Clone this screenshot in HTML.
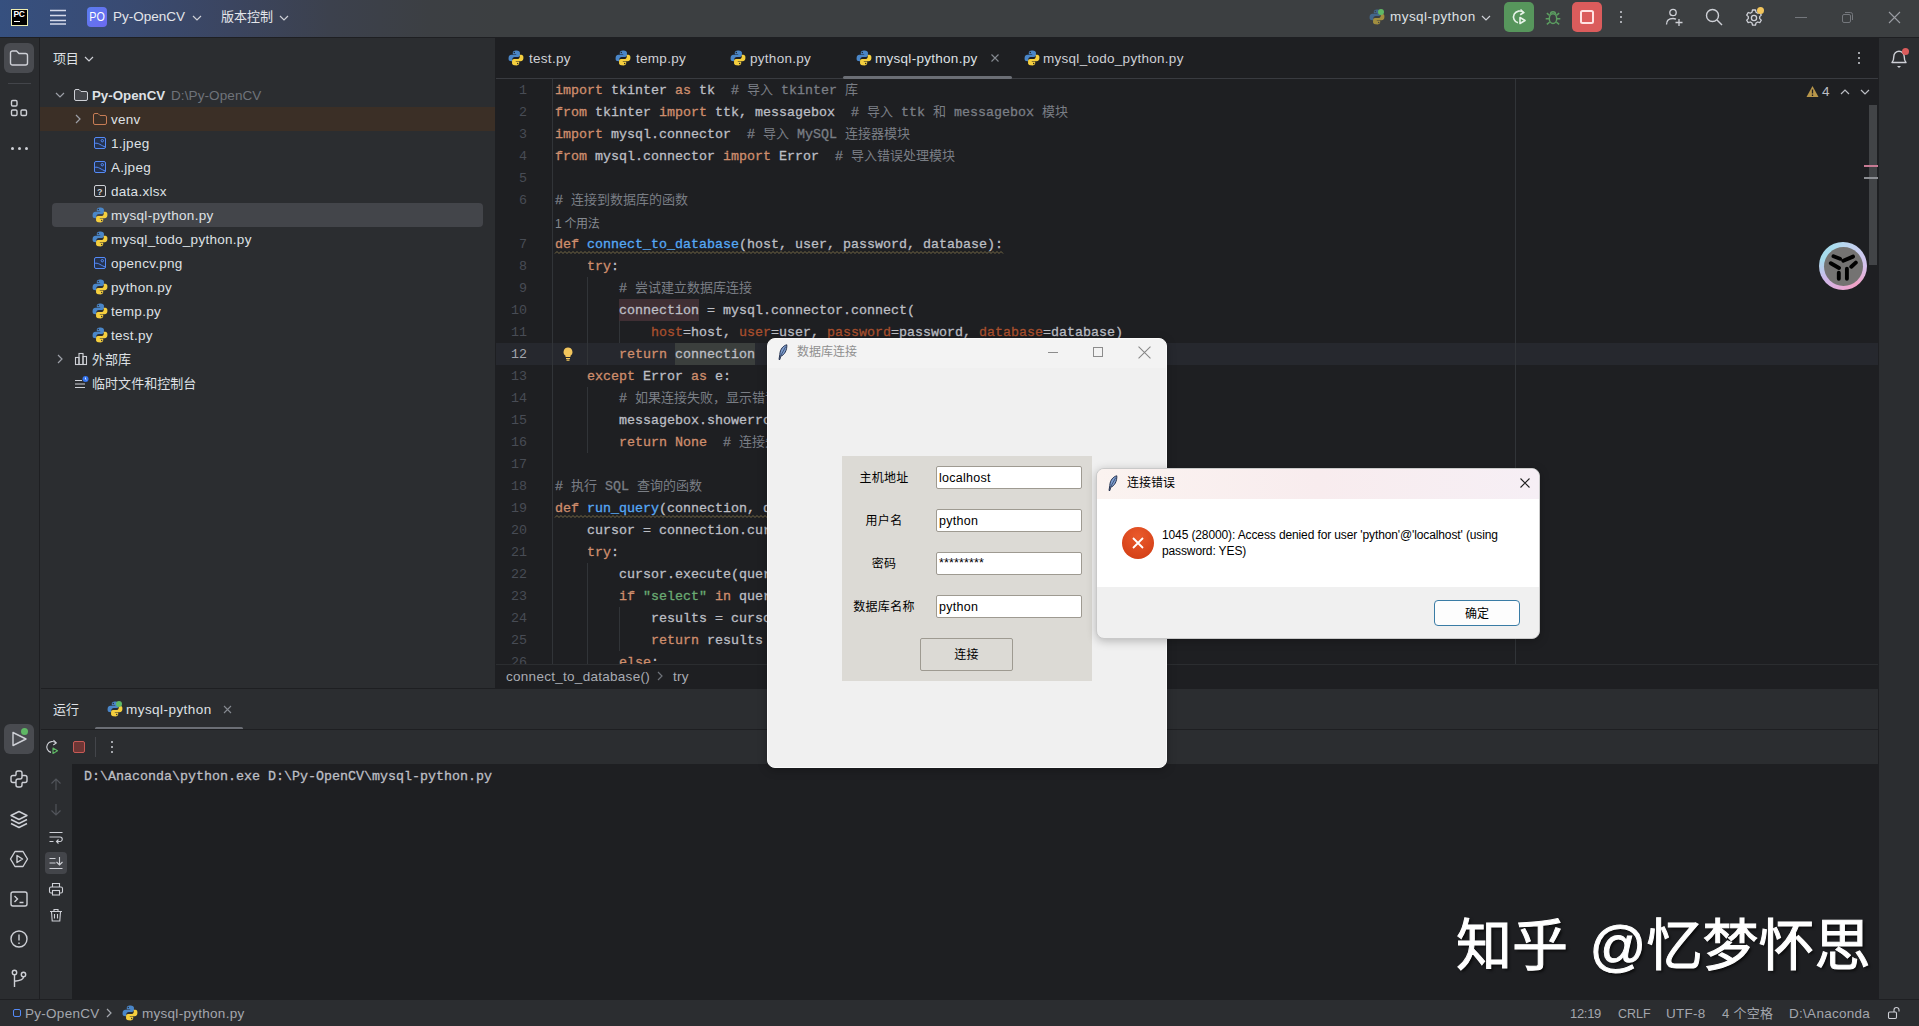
<!DOCTYPE html>
<html lang="zh"><head><meta charset="utf-8"><title>PyCharm</title>
<style>
*{box-sizing:border-box}
html,body{margin:0;padding:0}
body{width:1919px;height:1026px;overflow:hidden;background:#2b2d30;position:relative;font-family:"Liberation Sans","Noto Sans CJK SC",sans-serif;font-size:13.500px;letter-spacing:.28px;color:#dfe1e5}
.abs,.t,.ic,.box{position:absolute}
.t{white-space:pre}
.ic{display:block;overflow:visible}
.m{font-family:"Liberation Mono","Noto Sans CJK SC",monospace;font-size:13.333px;letter-spacing:0;-webkit-text-stroke:.3px currentColor}
.code{color:#bcbec4}
.k{color:#cf8e6d}.c{color:#7a7e85}.s{color:#6aab73}.f{color:#56a8f5}.n{color:#a94f2d}.num{color:#2aacb8}
.cj{font-size:13px;-webkit-text-stroke:0}
.ln{color:#484c55;text-align:right;width:31px;-webkit-text-stroke:0}
.dim{color:#6f737a}
.st{color:#a4a7ae}
</style></head><body>

<div class="box" style="left:0;top:0;width:1919px;height:38px;background:linear-gradient(to right,#36507f 0,#394b73 120px,#3b4560 230px,#3c414d 330px,#3c3f43 430px,#3c3f41 500px);border-bottom:1px solid #1e1f22"></div>
<div class="box" style="left:11px;top:9px;width:16.500px;height:16.500px;background:#000;border:1px solid #eeeeb0"></div>
<div class="t " style="left:13.5px;top:10px;height:9px;line-height:9px;font-size:8.500px;font-weight:bold;color:#fff;letter-spacing:-.4px">PC</div>
<div class="box" style="left:14px;top:21px;width:5.500px;height:1px;background:#fff"></div>
<svg class="ic" style="left:49px;top:8px" width="18" height="18" viewBox="0 0 18 18"><path d="M1 2.500h16M1 7.500h16M1 12.500h16M1 16h16" stroke="#d5daea" stroke-width="1.300" fill="none"/></svg>
<div class="box" style="left:87px;top:7px;width:20px;height:20px;border-radius:4px;background:linear-gradient(135deg,#5a7df0,#6d6af0)"></div>
<div class="t " style="left:87px;top:7px;height:20px;line-height:20px;width:20px;text-align:center;font-size:12.500px;color:#fff;letter-spacing:0;transform:scaleX(.86)">PO</div>
<div class="t " style="left:113px;top:7px;height:20px;line-height:20px;color:#e3e5ea;letter-spacing:0">Py-OpenCV</div>
<svg class="ic" style="left:189px;top:10px" width="16" height="16" viewBox="0 0 16 16"><path d="M4 6 l4 4 l4 -4" fill="none" stroke="#ced0d6" stroke-width="1.2"/></svg>
<div class="t " style="left:221px;top:7px;height:20px;line-height:20px;font-size:13px;color:#e3e5ea;letter-spacing:0">版本控制</div>
<svg class="ic" style="left:276px;top:10px" width="16" height="16" viewBox="0 0 16 16"><path d="M4 6 l4 4 l4 -4" fill="none" stroke="#ced0d6" stroke-width="1.2"/></svg>
<svg class="ic" style="opacity:.55;left:1369px;top:9px" width="16" height="16" viewBox="0.500 0.500 15 15"><path fill="#4a86c8" d="M7.9 1C5.9 1 5 1.9 5 3v1.5h3.2V5H3.5C2.3 5 1.3 5.9 1.1 7.600c-.2 1.600 0 3 1.200 3.300.4.1.9.1 1.200.1H4.500V9.200c0-1.200 1-2.200 2.300-2.200h3.100c1 0 1.800-.8 1.800-1.800V3c0-1-.9-1.800-1.900-1.900C9.200 1 8.500 1 7.900 1z"/><circle cx="6.400" cy="2.800" r=".65" fill="#3c3f41"/><path fill="#f5cf3e" d="M8.100 15c2 0 2.900-.9 2.900-2v-1.500H7.800V11h4.700c1.200 0 2.200-.9 2.400-2.600.2-1.600 0-3-1.200-3.300-.4-.1-.9-.1-1.200-.1H11.500v1.800c0 1.200-1 2.200-2.300 2.200H6.100c-1 0-1.800.8-1.800 1.800V13c0 1 .9 1.800 1.900 1.900.6.1 1.300.1 1.900.1z"/><circle cx="9.600" cy="13.200" r=".65" fill="#3c3f41"/></svg>
<div class="box" style="left:1378px;top:9px;width:6px;height:6px;border-radius:3px;background:#5fb865"></div>
<div class="t " style="left:1390px;top:7px;height:20px;line-height:20px;letter-spacing:.45px">mysql-python</div>
<svg class="ic" style="left:1478px;top:10px" width="16" height="16" viewBox="0 0 16 16"><path d="M4 6 l4 4 l4 -4" fill="none" stroke="#ced0d6" stroke-width="1.2"/></svg>
<div class="box" style="left:1504px;top:2px;width:30px;height:30px;border-radius:5px;background:#57965c"></div>
<svg class="ic" style="left:1510px;top:8px" width="18" height="18" viewBox="0 0 18 18"><path d="M13.500 4.500 A6 6 0 1 0 8 14.800" fill="none" stroke="#e6f3e7" stroke-width="1.600"/><path d="M10.500 1.500 l3.200 3 l-3.500 2.200" fill="none" stroke="#e6f3e7" stroke-width="1.600"/><path d="M10 9.500 l5 3 l-5 3z" fill="none" stroke="#e6f3e7" stroke-width="1.600" stroke-linejoin="round"/></svg>
<svg class="ic" style="left:1544px;top:8px" width="18" height="18" viewBox="0 0 16 16"><g fill="none" stroke="#5c9e61" stroke-width="1.300"><ellipse cx="8" cy="9.500" rx="3.300" ry="4.300"/><path d="M5.800 5.500 a2.200 2.200 0 0 1 4.400 0"/><path d="M1.500 9.500h3M11.500 9.500h3M2.500 4.500l2.500 2M13.500 4.500l-2.500 2M2.500 14.500l2.500-2M13.500 14.500l-2.500-2"/></g></svg>
<div class="box" style="left:1572px;top:2px;width:30px;height:30px;border-radius:5px;background:#db5c5c"></div>
<div class="box" style="left:1580px;top:10px;width:14px;height:14px;border-radius:2.500px;border:2px solid #ffe4e4"></div>
<div class="box" style="left:1620px;top:11px;width:2px;height:2px;border-radius:1px;background:#ced0d6"></div><div class="box" style="left:1620px;top:16px;width:2px;height:2px;border-radius:1px;background:#ced0d6"></div><div class="box" style="left:1620px;top:21px;width:2px;height:2px;border-radius:1px;background:#ced0d6"></div>
<svg class="ic" style="left:1664px;top:7px" width="20" height="20" viewBox="0 0 20 20"><g fill="none" stroke="#ced0d6" stroke-width="1.300"><circle cx="9" cy="5.500" r="3.200"/><path d="M2.500 17.500 c0-4 2.500-6 6.500-6 c1.200 0 2 .2 3 .6"/><path d="M15 12v7M11.500 15.500h7"/></g></svg>
<svg class="ic" style="left:1704px;top:7px" width="20" height="20" viewBox="0 0 20 20"><g fill="none" stroke="#ced0d6" stroke-width="1.400"><circle cx="8.500" cy="8.500" r="6"/><path d="M13 13l5 5"/></g></svg>
<svg class="ic" style="left:1744px;top:8px" width="20" height="20" viewBox="0 0 20 20"><g fill="none" stroke="#ced0d6" stroke-width="1.300"><circle cx="10" cy="10" r="2.600"/><path d="M8.500 2h3l.5 2.200 1.700 1 2.100-.7 1.500 2.600-1.600 1.500v2l1.600 1.500-1.500 2.600-2.100-.7-1.700 1-.5 2.200h-3l-.5-2.200-1.700-1-2.100.7-1.500-2.600 1.600-1.500v-2L2.700 7.100l1.500-2.600 2.100.7 1.700-1z" stroke-linejoin="round"/></g></svg>
<div class="box" style="left:1757px;top:7px;width:7px;height:7px;border-radius:4px;background:#f2c55c"></div>
<div class="box" style="left:1795px;top:17px;width:12px;height:1px;background:#74777c"></div>
<svg class="ic" style="left:1841px;top:11px" width="13" height="13" viewBox="0 0 13 13"><g fill="none" stroke="#74777c"><rect x="1.500" y="3.500" width="8" height="8" rx="1.500"/><path d="M4 1.500h5.500a2 2 0 0 1 2 2V9"/></g></svg>
<svg class="ic" style="left:1888px;top:11px" width="13" height="13" viewBox="0 0 13 13"><path d="M1 1l11 11M12 1L1 12" stroke="#9a9da3" stroke-width="1.100" fill="none"/></svg>
<div class="box" style="left:39px;top:38px;width:1px;height:961px;background:#1e1f22"></div>
<div class="box" style="left:4px;top:43px;width:30px;height:30px;border-radius:6px;background:#494b50"></div>
<svg class="ic" style="left:9px;top:48px" width="20" height="20" viewBox="0 0 20 20"><path d="M1.500 5 a2 2 0 0 1 2-2 h4 l2.500 2.500 h6.500 a2 2 0 0 1 2 2 v7.500 a2 2 0 0 1 -2 2 h-13 a2 2 0 0 1 -2-2z" fill="none" stroke="#ced0d6" stroke-width="1.400"/></svg>
<div class="box" style="left:8px;top:83px;width:23px;height:1px;background:#43454a"></div>
<svg class="ic" style="left:9px;top:98px" width="20" height="20" viewBox="0 0 20 20"><g fill="none" stroke="#ced0d6" stroke-width="1.400"><rect x="2.500" y="2.500" width="5.500" height="5.500" rx="1.200"/><rect x="2.500" y="12" width="5.500" height="5.500" rx="1.200"/><rect x="12" y="12" width="5.500" height="5.500" rx="1.200"/></g></svg>
<div class="box" style="left:11px;top:147px;width:2.500px;height:2.500px;border-radius:2px;background:#ced0d6"></div>
<div class="box" style="left:18px;top:147px;width:2.500px;height:2.500px;border-radius:2px;background:#ced0d6"></div>
<div class="box" style="left:25px;top:147px;width:2.500px;height:2.500px;border-radius:2px;background:#ced0d6"></div>
<div class="t " style="left:53px;top:49px;height:20px;line-height:20px;font-size:13px;letter-spacing:-.3px">项目</div>
<svg class="ic" style="left:81px;top:51px" width="16" height="16" viewBox="0 0 16 16"><path d="M4 6 l4 4 l4 -4" fill="none" stroke="#ced0d6" stroke-width="1.2"/></svg>
<div class="box" style="left:40px;top:107px;width:456px;height:24px;background:#3b2f26"></div>
<div class="box" style="left:52px;top:203px;width:431px;height:24px;border-radius:4px;background:#43454a"></div>
<svg class="ic" style="left:52px;top:87px" width="16" height="16" viewBox="0 0 16 16"><path d="M4 6 l4 4 l4 -4" fill="none" stroke="#9da0a8" stroke-width="1.2"/></svg>
<svg class="ic" style="left:73px;top:87px" width="16" height="16" viewBox="0 0 16 16"><path d="M1.500 4 a1.500 1.500 0 0 1 1.500-1.500 h3 l2 2 h5 a1.500 1.500 0 0 1 1.500 1.500 v6 a1.500 1.500 0 0 1 -1.500 1.500 h-10 a1.500 1.500 0 0 1 -1.500-1.500z" fill="#43454a" stroke="#ced0d6"/></svg>
<div class="t " style="left:92px;top:84px;height:24px;line-height:24px;font-weight:bold;font-size:13.300px;letter-spacing:0">Py-OpenCV</div>
<div class="t dim" style="left:171px;top:84px;height:24px;line-height:24px;letter-spacing:.1px">D:\Py-OpenCV</div>
<svg class="ic" style="left:70px;top:111px" width="16" height="16" viewBox="0 0 16 16"><path d="M6 4 l4 4 l-4 4" fill="none" stroke="#9da0a8" stroke-width="1.2"/></svg>
<svg class="ic" style="left:92px;top:111px" width="16" height="16" viewBox="0 0 16 16"><path d="M1.500 4 a1.500 1.500 0 0 1 1.500-1.500 h3 l2 2 h5 a1.500 1.500 0 0 1 1.500 1.500 v6 a1.500 1.500 0 0 1 -1.500 1.500 h-10 a1.500 1.500 0 0 1 -1.500-1.500z" fill="none" stroke="#c77d55"/></svg>
<div class="t " style="left:111px;top:108px;height:24px;line-height:24px;">venv</div>
<svg class="ic" style="left:92px;top:135px" width="16" height="16" viewBox="0 0 16 16"><rect x="2.500" y="2.500" width="11" height="11" rx="1.500" fill="#25324d" stroke="#548af7"/><circle cx="10.300" cy="5.700" r="1.200" fill="none" stroke="#548af7"/><path d="M2.500 8.500 C6 7 9.500 11 13.500 12" stroke="#548af7" fill="none"/></svg>
<div class="t " style="left:111px;top:132px;height:24px;line-height:24px;">1.jpeg</div>
<svg class="ic" style="left:92px;top:159px" width="16" height="16" viewBox="0 0 16 16"><rect x="2.500" y="2.500" width="11" height="11" rx="1.500" fill="#25324d" stroke="#548af7"/><circle cx="10.300" cy="5.700" r="1.200" fill="none" stroke="#548af7"/><path d="M2.500 8.500 C6 7 9.500 11 13.500 12" stroke="#548af7" fill="none"/></svg>
<div class="t " style="left:111px;top:156px;height:24px;line-height:24px;">A.jpeg</div>
<svg class="ic" style="left:92px;top:183px" width="16" height="16" viewBox="0 0 16 16"><rect x="2.500" y="2.500" width="11" height="11" rx="1.500" fill="none" stroke="#ced0d6"/><text x="8" y="11.500" font-size="9" font-weight="bold" text-anchor="middle" fill="#ced0d6" font-family="Liberation Sans,sans-serif">?</text></svg>
<div class="t " style="left:111px;top:180px;height:24px;line-height:24px;">data.xlsx</div>
<svg class="ic" style="left:92px;top:207px" width="16" height="16" viewBox="0.500 0.500 15 15"><path fill="#4a86c8" d="M7.9 1C5.9 1 5 1.9 5 3v1.5h3.2V5H3.5C2.3 5 1.3 5.9 1.1 7.600c-.2 1.600 0 3 1.200 3.300.4.1.9.1 1.200.1H4.500V9.200c0-1.200 1-2.200 2.300-2.200h3.100c1 0 1.800-.8 1.800-1.800V3c0-1-.9-1.800-1.900-1.900C9.200 1 8.500 1 7.900 1z"/><circle cx="6.400" cy="2.800" r=".65" fill="#2b2d30"/><path fill="#f5cf3e" d="M8.100 15c2 0 2.900-.9 2.900-2v-1.500H7.800V11h4.700c1.200 0 2.200-.9 2.400-2.600.2-1.600 0-3-1.200-3.300-.4-.1-.9-.1-1.200-.1H11.500v1.800c0 1.200-1 2.200-2.300 2.200H6.100c-1 0-1.800.8-1.800 1.800V13c0 1 .9 1.800 1.900 1.900.6.1 1.300.1 1.900.1z"/><circle cx="9.600" cy="13.200" r=".65" fill="#2b2d30"/></svg>
<div class="t " style="left:111px;top:204px;height:24px;line-height:24px;">mysql-python.py</div>
<svg class="ic" style="left:92px;top:231px" width="16" height="16" viewBox="0.500 0.500 15 15"><path fill="#4a86c8" d="M7.9 1C5.9 1 5 1.9 5 3v1.5h3.2V5H3.5C2.3 5 1.3 5.9 1.1 7.600c-.2 1.600 0 3 1.200 3.300.4.1.9.1 1.200.1H4.500V9.200c0-1.200 1-2.200 2.300-2.200h3.100c1 0 1.800-.8 1.800-1.800V3c0-1-.9-1.800-1.900-1.900C9.200 1 8.500 1 7.900 1z"/><circle cx="6.400" cy="2.800" r=".65" fill="#2b2d30"/><path fill="#f5cf3e" d="M8.100 15c2 0 2.900-.9 2.900-2v-1.500H7.800V11h4.700c1.200 0 2.200-.9 2.400-2.600.2-1.600 0-3-1.200-3.300-.4-.1-.9-.1-1.200-.1H11.500v1.800c0 1.200-1 2.200-2.300 2.200H6.100c-1 0-1.800.8-1.800 1.800V13c0 1 .9 1.800 1.900 1.900.6.1 1.300.1 1.900.1z"/><circle cx="9.600" cy="13.200" r=".65" fill="#2b2d30"/></svg>
<div class="t " style="left:111px;top:228px;height:24px;line-height:24px;">mysql_todo_python.py</div>
<svg class="ic" style="left:92px;top:255px" width="16" height="16" viewBox="0 0 16 16"><rect x="2.500" y="2.500" width="11" height="11" rx="1.500" fill="#25324d" stroke="#548af7"/><circle cx="10.300" cy="5.700" r="1.200" fill="none" stroke="#548af7"/><path d="M2.500 8.500 C6 7 9.500 11 13.500 12" stroke="#548af7" fill="none"/></svg>
<div class="t " style="left:111px;top:252px;height:24px;line-height:24px;">opencv.png</div>
<svg class="ic" style="left:92px;top:279px" width="16" height="16" viewBox="0.500 0.500 15 15"><path fill="#4a86c8" d="M7.9 1C5.9 1 5 1.9 5 3v1.5h3.2V5H3.5C2.3 5 1.3 5.9 1.1 7.600c-.2 1.600 0 3 1.200 3.300.4.1.9.1 1.200.1H4.500V9.200c0-1.200 1-2.200 2.300-2.200h3.100c1 0 1.800-.8 1.800-1.800V3c0-1-.9-1.800-1.900-1.900C9.200 1 8.500 1 7.900 1z"/><circle cx="6.400" cy="2.800" r=".65" fill="#2b2d30"/><path fill="#f5cf3e" d="M8.100 15c2 0 2.900-.9 2.900-2v-1.500H7.800V11h4.700c1.200 0 2.200-.9 2.400-2.600.2-1.600 0-3-1.200-3.300-.4-.1-.9-.1-1.200-.1H11.500v1.800c0 1.200-1 2.200-2.300 2.200H6.100c-1 0-1.800.8-1.800 1.800V13c0 1 .9 1.800 1.900 1.900.6.1 1.300.1 1.900.1z"/><circle cx="9.600" cy="13.200" r=".65" fill="#2b2d30"/></svg>
<div class="t " style="left:111px;top:276px;height:24px;line-height:24px;">python.py</div>
<svg class="ic" style="left:92px;top:303px" width="16" height="16" viewBox="0.500 0.500 15 15"><path fill="#4a86c8" d="M7.9 1C5.9 1 5 1.9 5 3v1.5h3.2V5H3.5C2.3 5 1.3 5.9 1.1 7.600c-.2 1.600 0 3 1.200 3.300.4.1.9.1 1.200.1H4.500V9.200c0-1.200 1-2.200 2.300-2.200h3.100c1 0 1.800-.8 1.800-1.800V3c0-1-.9-1.800-1.900-1.900C9.200 1 8.500 1 7.900 1z"/><circle cx="6.400" cy="2.800" r=".65" fill="#2b2d30"/><path fill="#f5cf3e" d="M8.100 15c2 0 2.900-.9 2.900-2v-1.500H7.800V11h4.700c1.200 0 2.200-.9 2.400-2.600.2-1.600 0-3-1.200-3.300-.4-.1-.9-.1-1.200-.1H11.500v1.800c0 1.200-1 2.200-2.300 2.200H6.100c-1 0-1.800.8-1.800 1.800V13c0 1 .9 1.800 1.900 1.900.6.1 1.300.1 1.900.1z"/><circle cx="9.600" cy="13.200" r=".65" fill="#2b2d30"/></svg>
<div class="t " style="left:111px;top:300px;height:24px;line-height:24px;">temp.py</div>
<svg class="ic" style="left:92px;top:327px" width="16" height="16" viewBox="0.500 0.500 15 15"><path fill="#4a86c8" d="M7.9 1C5.9 1 5 1.9 5 3v1.5h3.2V5H3.5C2.3 5 1.3 5.9 1.1 7.600c-.2 1.600 0 3 1.200 3.300.4.1.9.1 1.200.1H4.500V9.200c0-1.200 1-2.200 2.300-2.200h3.100c1 0 1.800-.8 1.800-1.800V3c0-1-.9-1.800-1.900-1.900C9.200 1 8.500 1 7.900 1z"/><circle cx="6.400" cy="2.800" r=".65" fill="#2b2d30"/><path fill="#f5cf3e" d="M8.100 15c2 0 2.900-.9 2.900-2v-1.500H7.800V11h4.700c1.200 0 2.200-.9 2.400-2.600.2-1.600 0-3-1.200-3.300-.4-.1-.9-.1-1.200-.1H11.500v1.800c0 1.200-1 2.200-2.300 2.200H6.100c-1 0-1.800.8-1.800 1.800V13c0 1 .9 1.800 1.900 1.900.6.1 1.300.1 1.900.1z"/><circle cx="9.600" cy="13.200" r=".65" fill="#2b2d30"/></svg>
<div class="t " style="left:111px;top:324px;height:24px;line-height:24px;">test.py</div>
<svg class="ic" style="left:52px;top:351px" width="16" height="16" viewBox="0 0 16 16"><path d="M6 4 l4 4 l-4 4" fill="none" stroke="#9da0a8" stroke-width="1.2"/></svg>
<svg class="ic" style="left:73px;top:351px" width="16" height="16" viewBox="0 0 16 16"><g fill="none" stroke="#ced0d6" stroke-width="1.100"><rect x="2.500" y="6.500" width="3.500" height="7"/><rect x="6" y="2.500" width="4" height="11"/><rect x="10" y="5.500" width="3.500" height="8"/></g></svg>
<div class="t " style="left:92px;top:348px;height:24px;line-height:24px;font-size:13px;letter-spacing:0">外部库</div>
<svg class="ic" style="left:73px;top:375px" width="16" height="16" viewBox="0 0 16 16"><path d="M2 5.500h7M2 9h10M2 12.500h10" stroke="#ced0d6" stroke-width="1.100" fill="none"/><circle cx="12.500" cy="4" r="3" fill="#3574f0"/><path d="M12.500 2.500v1.700l1 .8" stroke="#fff" stroke-width=".8" fill="none"/></svg>
<div class="t " style="left:92px;top:372px;height:24px;line-height:24px;font-size:13px;letter-spacing:.05px">临时文件和控制台</div>
<div class="box" style="left:495px;top:38px;width:1384px;height:651px;background:#1e1f22;border-left:1px solid #1e1f22"></div>
<div class="box" style="left:496px;top:78px;width:1382px;height:1px;background:#393b40"></div>
<svg class="ic" style="left:508px;top:50px" width="16" height="16" viewBox="0.500 0.500 15 15"><path fill="#4a86c8" d="M7.9 1C5.9 1 5 1.9 5 3v1.5h3.2V5H3.5C2.3 5 1.3 5.9 1.1 7.600c-.2 1.600 0 3 1.200 3.300.4.1.9.1 1.200.1H4.500V9.200c0-1.200 1-2.200 2.300-2.200h3.100c1 0 1.800-.8 1.800-1.800V3c0-1-.9-1.800-1.900-1.900C9.200 1 8.500 1 7.900 1z"/><circle cx="6.400" cy="2.800" r=".65" fill="#1e1f22"/><path fill="#f5cf3e" d="M8.100 15c2 0 2.900-.9 2.900-2v-1.500H7.800V11h4.700c1.200 0 2.200-.9 2.400-2.600.2-1.600 0-3-1.200-3.300-.4-.1-.9-.1-1.200-.1H11.500v1.800c0 1.200-1 2.200-2.300 2.200H6.100c-1 0-1.800.8-1.800 1.800V13c0 1 .9 1.800 1.900 1.900.6.1 1.300.1 1.900.1z"/><circle cx="9.600" cy="13.200" r=".65" fill="#1e1f22"/></svg>
<div class="t " style="left:529px;top:49px;height:20px;line-height:20px;color:#ced0d6">test.py</div>
<svg class="ic" style="left:615px;top:50px" width="16" height="16" viewBox="0.500 0.500 15 15"><path fill="#4a86c8" d="M7.9 1C5.9 1 5 1.9 5 3v1.5h3.2V5H3.5C2.3 5 1.3 5.9 1.1 7.600c-.2 1.600 0 3 1.200 3.300.4.1.9.1 1.200.1H4.500V9.200c0-1.200 1-2.200 2.300-2.200h3.100c1 0 1.800-.8 1.800-1.800V3c0-1-.9-1.800-1.900-1.900C9.200 1 8.500 1 7.900 1z"/><circle cx="6.400" cy="2.800" r=".65" fill="#1e1f22"/><path fill="#f5cf3e" d="M8.100 15c2 0 2.900-.9 2.900-2v-1.500H7.800V11h4.700c1.200 0 2.200-.9 2.400-2.600.2-1.600 0-3-1.200-3.300-.4-.1-.9-.1-1.200-.1H11.500v1.800c0 1.200-1 2.200-2.300 2.200H6.100c-1 0-1.800.8-1.800 1.800V13c0 1 .9 1.800 1.900 1.900.6.1 1.300.1 1.900.1z"/><circle cx="9.600" cy="13.200" r=".65" fill="#1e1f22"/></svg>
<div class="t " style="left:636px;top:49px;height:20px;line-height:20px;color:#ced0d6">temp.py</div>
<svg class="ic" style="left:730px;top:50px" width="16" height="16" viewBox="0.500 0.500 15 15"><path fill="#4a86c8" d="M7.9 1C5.9 1 5 1.9 5 3v1.5h3.2V5H3.5C2.3 5 1.3 5.9 1.1 7.600c-.2 1.600 0 3 1.200 3.300.4.1.9.1 1.200.1H4.500V9.200c0-1.200 1-2.200 2.300-2.200h3.100c1 0 1.800-.8 1.800-1.800V3c0-1-.9-1.800-1.900-1.900C9.200 1 8.500 1 7.900 1z"/><circle cx="6.400" cy="2.800" r=".65" fill="#1e1f22"/><path fill="#f5cf3e" d="M8.100 15c2 0 2.900-.9 2.900-2v-1.500H7.800V11h4.700c1.200 0 2.200-.9 2.400-2.600.2-1.600 0-3-1.200-3.300-.4-.1-.9-.1-1.200-.1H11.500v1.800c0 1.200-1 2.200-2.300 2.200H6.100c-1 0-1.800.8-1.800 1.800V13c0 1 .9 1.800 1.900 1.900.6.1 1.300.1 1.900.1z"/><circle cx="9.600" cy="13.200" r=".65" fill="#1e1f22"/></svg>
<div class="t " style="left:750px;top:49px;height:20px;line-height:20px;color:#ced0d6">python.py</div>
<svg class="ic" style="left:856px;top:50px" width="16" height="16" viewBox="0.500 0.500 15 15"><path fill="#4a86c8" d="M7.9 1C5.9 1 5 1.9 5 3v1.5h3.2V5H3.5C2.3 5 1.3 5.9 1.1 7.600c-.2 1.600 0 3 1.200 3.300.4.1.9.1 1.200.1H4.500V9.200c0-1.200 1-2.200 2.300-2.200h3.100c1 0 1.800-.8 1.800-1.800V3c0-1-.9-1.800-1.900-1.900C9.200 1 8.500 1 7.900 1z"/><circle cx="6.400" cy="2.800" r=".65" fill="#1e1f22"/><path fill="#f5cf3e" d="M8.100 15c2 0 2.900-.9 2.900-2v-1.500H7.800V11h4.700c1.200 0 2.200-.9 2.400-2.600.2-1.600 0-3-1.200-3.300-.4-.1-.9-.1-1.200-.1H11.500v1.800c0 1.200-1 2.200-2.300 2.200H6.100c-1 0-1.800.8-1.800 1.800V13c0 1 .9 1.800 1.900 1.900.6.1 1.300.1 1.900.1z"/><circle cx="9.600" cy="13.200" r=".65" fill="#1e1f22"/></svg>
<div class="t " style="left:875px;top:49px;height:20px;line-height:20px;color:#dfe1e5">mysql-python.py</div>
<svg class="ic" style="left:1024px;top:50px" width="16" height="16" viewBox="0.500 0.500 15 15"><path fill="#4a86c8" d="M7.9 1C5.9 1 5 1.9 5 3v1.5h3.2V5H3.5C2.3 5 1.3 5.9 1.1 7.600c-.2 1.600 0 3 1.200 3.300.4.1.9.1 1.200.1H4.500V9.200c0-1.200 1-2.200 2.300-2.200h3.100c1 0 1.800-.8 1.800-1.800V3c0-1-.9-1.800-1.900-1.900C9.200 1 8.500 1 7.900 1z"/><circle cx="6.400" cy="2.800" r=".65" fill="#1e1f22"/><path fill="#f5cf3e" d="M8.100 15c2 0 2.900-.9 2.900-2v-1.500H7.800V11h4.700c1.200 0 2.200-.9 2.400-2.600.2-1.600 0-3-1.200-3.300-.4-.1-.9-.1-1.200-.1H11.500v1.800c0 1.200-1 2.200-2.300 2.200H6.100c-1 0-1.800.8-1.800 1.800V13c0 1 .9 1.800 1.900 1.900.6.1 1.300.1 1.900.1z"/><circle cx="9.600" cy="13.200" r=".65" fill="#1e1f22"/></svg>
<div class="t " style="left:1043px;top:49px;height:20px;line-height:20px;color:#ced0d6">mysql_todo_python.py</div>
<svg class="ic" style="left:990px;top:53px" width="10" height="10" viewBox="0 0 10 10"><path d="M1.500 1.500l7 7M8.500 1.500l-7 7" stroke="#868a91" stroke-width="1.100"/></svg>
<div class="box" style="left:843px;top:76px;width:169px;height:3px;border-radius:1.500px;background:#6b6e75"></div>
<div class="box" style="left:1858px;top:52px;width:2px;height:2px;border-radius:1px;background:#ced0d6"></div><div class="box" style="left:1858px;top:57px;width:2px;height:2px;border-radius:1px;background:#ced0d6"></div><div class="box" style="left:1858px;top:62px;width:2px;height:2px;border-radius:1px;background:#ced0d6"></div>
<div class="box" style="left:496px;top:343px;width:1382px;height:22px;background:#26282e"></div>
<div class="box" style="left:552px;top:79px;width:1px;height:585px;background:#313438"></div>
<div class="box" style="left:1515px;top:79px;width:1px;height:585px;background:#313438"></div>
<div class="box" style="left:496px;top:79px;width:1382px;height:585px;overflow:hidden">
<div class="box" style="left:123px;top:220px;width:80px;height:22px;background:#402f34"></div>
<div class="box" style="left:179px;top:264px;width:80px;height:22px;background:#3b3f3d"></div>
<div class="box" style="left:91px;top:198px;width:1px;height:88px;background:#313438"></div>
<div class="box" style="left:123px;top:242px;width:1px;height:22px;background:#313438"></div>
<div class="box" style="left:91px;top:308px;width:1px;height:66px;background:#313438"></div>
<div class="box" style="left:91px;top:484px;width:1px;height:110px;background:#313438"></div>
<div class="box" style="left:123px;top:528px;width:1px;height:44px;background:#313438"></div>
<div class="t m ln" style="left:0;top:1px;height:22px;line-height:22px;">1</div>
<div class="t m code" style="left:59px;top:1px;height:22px;line-height:22px"><span class="k">import</span> tkinter <span class="k">as</span> tk  <span class="c"># <span class="cj">导入</span> tkinter <span class="cj">库</span></span></div>
<div class="t m ln" style="left:0;top:23px;height:22px;line-height:22px;">2</div>
<div class="t m code" style="left:59px;top:23px;height:22px;line-height:22px"><span class="k">from</span> tkinter <span class="k">import</span> ttk, messagebox  <span class="c"># <span class="cj">导入</span> ttk <span class="cj">和</span> messagebox <span class="cj">模块</span></span></div>
<div class="t m ln" style="left:0;top:45px;height:22px;line-height:22px;">3</div>
<div class="t m code" style="left:59px;top:45px;height:22px;line-height:22px"><span class="k">import</span> mysql.connector  <span class="c"># <span class="cj">导入</span> MySQL <span class="cj">连接器模块</span></span></div>
<div class="t m ln" style="left:0;top:67px;height:22px;line-height:22px;">4</div>
<div class="t m code" style="left:59px;top:67px;height:22px;line-height:22px"><span class="k">from</span> mysql.connector <span class="k">import</span> Error  <span class="c"># <span class="cj">导入错误处理模块</span></span></div>
<div class="t m ln" style="left:0;top:89px;height:22px;line-height:22px;">5</div>
<div class="t m ln" style="left:0;top:111px;height:22px;line-height:22px;">6</div>
<div class="t m code" style="left:59px;top:111px;height:22px;line-height:22px"><span class="c"># <span class="cj">连接到数据库的函数</span></span></div>
<div class="t m ln" style="left:0;top:155px;height:22px;line-height:22px;">7</div>
<div class="t m code" style="left:59px;top:155px;height:22px;line-height:22px"><span class="k">def</span><span class="f"> </span><span class="f">connect_to_database</span>(host, user, password, database):</div>
<div class="t m ln" style="left:0;top:177px;height:22px;line-height:22px;">8</div>
<div class="t m code" style="left:59px;top:177px;height:22px;line-height:22px">    <span class="k">try</span>:</div>
<div class="t m ln" style="left:0;top:199px;height:22px;line-height:22px;">9</div>
<div class="t m code" style="left:59px;top:199px;height:22px;line-height:22px">        <span class="c"># <span class="cj">尝试建立数据库连接</span></span></div>
<div class="t m ln" style="left:0;top:221px;height:22px;line-height:22px;">10</div>
<div class="t m code" style="left:59px;top:221px;height:22px;line-height:22px">        connection = mysql.connector.connect(</div>
<div class="t m ln" style="left:0;top:243px;height:22px;line-height:22px;">11</div>
<div class="t m code" style="left:59px;top:243px;height:22px;line-height:22px">            <span class="n">host</span>=host, <span class="n">user</span>=user, <span class="n">password</span>=password, <span class="n">database</span>=database)</div>
<div class="t m ln" style="left:0;top:265px;height:22px;line-height:22px;color:#a1a3ab">12</div>
<div class="t m code" style="left:59px;top:265px;height:22px;line-height:22px">        <span class="k">return</span> connection</div>
<div class="t m ln" style="left:0;top:287px;height:22px;line-height:22px;">13</div>
<div class="t m code" style="left:59px;top:287px;height:22px;line-height:22px">    <span class="k">except</span> Error <span class="k">as</span> e:</div>
<div class="t m ln" style="left:0;top:309px;height:22px;line-height:22px;">14</div>
<div class="t m code" style="left:59px;top:309px;height:22px;line-height:22px">        <span class="c"># <span class="cj">如果连接失败，显示错误消息</span></span></div>
<div class="t m ln" style="left:0;top:331px;height:22px;line-height:22px;">15</div>
<div class="t m code" style="left:59px;top:331px;height:22px;line-height:22px">        messagebox.showerror(<span class="s">&quot;连接错误&quot;</span>, str(e))</div>
<div class="t m ln" style="left:0;top:353px;height:22px;line-height:22px;">16</div>
<div class="t m code" style="left:59px;top:353px;height:22px;line-height:22px">        <span class="k">return</span> <span class="k">None</span>  <span class="c"># <span class="cj">连接失败返回</span> None</span></div>
<div class="t m ln" style="left:0;top:375px;height:22px;line-height:22px;">17</div>
<div class="t m ln" style="left:0;top:397px;height:22px;line-height:22px;">18</div>
<div class="t m code" style="left:59px;top:397px;height:22px;line-height:22px"><span class="c"># <span class="cj">执行</span> SQL <span class="cj">查询的函数</span></span></div>
<div class="t m ln" style="left:0;top:419px;height:22px;line-height:22px;">19</div>
<div class="t m code" style="left:59px;top:419px;height:22px;line-height:22px"><span class="k">def</span><span class="f"> </span><span class="f">run_query</span>(connection, query):</div>
<div class="t m ln" style="left:0;top:441px;height:22px;line-height:22px;">20</div>
<div class="t m code" style="left:59px;top:441px;height:22px;line-height:22px">    cursor = connection.cursor()</div>
<div class="t m ln" style="left:0;top:463px;height:22px;line-height:22px;">21</div>
<div class="t m code" style="left:59px;top:463px;height:22px;line-height:22px">    <span class="k">try</span>:</div>
<div class="t m ln" style="left:0;top:485px;height:22px;line-height:22px;">22</div>
<div class="t m code" style="left:59px;top:485px;height:22px;line-height:22px">        cursor.execute(query)</div>
<div class="t m ln" style="left:0;top:507px;height:22px;line-height:22px;">23</div>
<div class="t m code" style="left:59px;top:507px;height:22px;line-height:22px">        <span class="k">if</span> <span class="s">&quot;select&quot;</span> <span class="k">in</span> query.lower():</div>
<div class="t m ln" style="left:0;top:529px;height:22px;line-height:22px;">24</div>
<div class="t m code" style="left:59px;top:529px;height:22px;line-height:22px">            results = cursor.fetchall()</div>
<div class="t m ln" style="left:0;top:551px;height:22px;line-height:22px;">25</div>
<div class="t m code" style="left:59px;top:551px;height:22px;line-height:22px">            <span class="k">return</span> results</div>
<div class="t m ln" style="left:0;top:573px;height:22px;line-height:22px;">26</div>
<div class="t m code" style="left:59px;top:573px;height:22px;line-height:22px">        <span class="k">else</span>:</div>
<div class="t " style="left:59px;top:134px;height:22px;line-height:22px;font-size:12px;color:#868a91;letter-spacing:-.3px">1 个用法</div>
<svg class="ic" style="left:59px;top:172px" width="448" height="3" viewBox="0 0 448 3"><path d="M0 2.500 L2 0.5 L4 2.5 L6 0.5 L8 2.5 L10 0.5 L12 2.5 L14 0.5 L16 2.5 L18 0.5 L20 2.5 L22 0.5 L24 2.5 L26 0.5 L28 2.5 L30 0.5 L32 2.5 L34 0.5 L36 2.5 L38 0.5 L40 2.5 L42 0.5 L44 2.5 L46 0.5 L48 2.5 L50 0.5 L52 2.5 L54 0.5 L56 2.5 L58 0.5 L60 2.5 L62 0.5 L64 2.5 L66 0.5 L68 2.5 L70 0.5 L72 2.5 L74 0.5 L76 2.5 L78 0.5 L80 2.5 L82 0.5 L84 2.5 L86 0.5 L88 2.5 L90 0.5 L92 2.5 L94 0.5 L96 2.5 L98 0.5 L100 2.5 L102 0.5 L104 2.5 L106 0.5 L108 2.5 L110 0.5 L112 2.5 L114 0.5 L116 2.5 L118 0.5 L120 2.5 L122 0.5 L124 2.5 L126 0.5 L128 2.5 L130 0.5 L132 2.5 L134 0.5 L136 2.5 L138 0.5 L140 2.5 L142 0.5 L144 2.5 L146 0.5 L148 2.5 L150 0.5 L152 2.5 L154 0.5 L156 2.5 L158 0.5 L160 2.5 L162 0.5 L164 2.5 L166 0.5 L168 2.5 L170 0.5 L172 2.5 L174 0.5 L176 2.5 L178 0.5 L180 2.5 L182 0.5 L184 2.5 L186 0.5 L188 2.5 L190 0.5 L192 2.5 L194 0.5 L196 2.5 L198 0.5 L200 2.5 L202 0.5 L204 2.5 L206 0.5 L208 2.5 L210 0.5 L212 2.5 L214 0.5 L216 2.5 L218 0.5 L220 2.5 L222 0.5 L224 2.5 L226 0.5 L228 2.5 L230 0.5 L232 2.5 L234 0.5 L236 2.5 L238 0.5 L240 2.5 L242 0.5 L244 2.5 L246 0.5 L248 2.5 L250 0.5 L252 2.5 L254 0.5 L256 2.5 L258 0.5 L260 2.5 L262 0.5 L264 2.5 L266 0.5 L268 2.5 L270 0.5 L272 2.5 L274 0.5 L276 2.5 L278 0.5 L280 2.5 L282 0.5 L284 2.5 L286 0.5 L288 2.5 L290 0.5 L292 2.5 L294 0.5 L296 2.5 L298 0.5 L300 2.5 L302 0.5 L304 2.5 L306 0.5 L308 2.5 L310 0.5 L312 2.5 L314 0.5 L316 2.5 L318 0.5 L320 2.5 L322 0.5 L324 2.5 L326 0.5 L328 2.5 L330 0.5 L332 2.5 L334 0.5 L336 2.5 L338 0.5 L340 2.5 L342 0.5 L344 2.5 L346 0.5 L348 2.5 L350 0.5 L352 2.5 L354 0.5 L356 2.5 L358 0.5 L360 2.5 L362 0.5 L364 2.5 L366 0.5 L368 2.5 L370 0.5 L372 2.5 L374 0.5 L376 2.5 L378 0.5 L380 2.5 L382 0.5 L384 2.5 L386 0.5 L388 2.5 L390 0.5 L392 2.5 L394 0.5 L396 2.5 L398 0.5 L400 2.5 L402 0.5 L404 2.5 L406 0.5 L408 2.5 L410 0.5 L412 2.5 L414 0.5 L416 2.5 L418 0.5 L420 2.5 L422 0.5 L424 2.5 L426 0.5 L428 2.5 L430 0.5 L432 2.5 L434 0.5 L436 2.5 L438 0.5 L440 2.5 L442 0.5 L444 2.5 L446 0.5 L448 2.5" stroke="#8a7a4e" fill="none" stroke-width=".8"/></svg>
<svg class="ic" style="left:59px;top:436px" width="264" height="3" viewBox="0 0 264 3"><path d="M0 2.500 L2 0.5 L4 2.5 L6 0.5 L8 2.5 L10 0.5 L12 2.5 L14 0.5 L16 2.5 L18 0.5 L20 2.5 L22 0.5 L24 2.5 L26 0.5 L28 2.5 L30 0.5 L32 2.5 L34 0.5 L36 2.5 L38 0.5 L40 2.5 L42 0.5 L44 2.5 L46 0.5 L48 2.5 L50 0.5 L52 2.5 L54 0.5 L56 2.5 L58 0.5 L60 2.5 L62 0.5 L64 2.5 L66 0.5 L68 2.5 L70 0.5 L72 2.5 L74 0.5 L76 2.5 L78 0.5 L80 2.5 L82 0.5 L84 2.5 L86 0.5 L88 2.5 L90 0.5 L92 2.5 L94 0.5 L96 2.5 L98 0.5 L100 2.5 L102 0.5 L104 2.5 L106 0.5 L108 2.5 L110 0.5 L112 2.5 L114 0.5 L116 2.5 L118 0.5 L120 2.5 L122 0.5 L124 2.5 L126 0.5 L128 2.5 L130 0.5 L132 2.5 L134 0.5 L136 2.5 L138 0.5 L140 2.5 L142 0.5 L144 2.5 L146 0.5 L148 2.5 L150 0.5 L152 2.5 L154 0.5 L156 2.5 L158 0.5 L160 2.5 L162 0.5 L164 2.5 L166 0.5 L168 2.5 L170 0.5 L172 2.5 L174 0.5 L176 2.5 L178 0.5 L180 2.5 L182 0.5 L184 2.5 L186 0.5 L188 2.5 L190 0.5 L192 2.5 L194 0.5 L196 2.5 L198 0.5 L200 2.5 L202 0.5 L204 2.5 L206 0.5 L208 2.5 L210 0.5 L212 2.5 L214 0.5 L216 2.5 L218 0.5 L220 2.5 L222 0.5 L224 2.5 L226 0.5 L228 2.5 L230 0.5 L232 2.5 L234 0.5 L236 2.5 L238 0.5 L240 2.5 L242 0.5 L244 2.5 L246 0.5 L248 2.5 L250 0.5 L252 2.5 L254 0.5 L256 2.5 L258 0.5 L260 2.5 L262 0.5 L264 2.5" stroke="#8a7a4e" fill="none" stroke-width=".8"/></svg>
<svg class="ic" style="left:64px;top:267px" width="16" height="16" viewBox="0 0 16 16"><path d="M8 1.500a4.500 4.500 0 0 0-2.500 8.200V11h5V9.700A4.500 4.500 0 0 0 8 1.500z" fill="#f2c55c"/><path d="M6 12.500h4M6.500 14.200h3" stroke="#f2c55c" stroke-width="1.200"/></svg>
</div>
<svg class="ic" style="left:1806px;top:85px" width="13" height="13" viewBox="0 0 13 13"><path d="M6.500 1L12.500 12H.5z" fill="#b8964a"/><path d="M6.500 4.500v4M6.500 9.500v1.500" stroke="#1e1f22" stroke-width="1.300"/></svg>
<div class="t " style="left:1822px;top:82px;height:20px;line-height:20px;font-size:13.500px;color:#bcbec4">4</div>
<svg class="ic" style="left:1837px;top:84px" width="16" height="16" viewBox="0 0 16 16"><path d="M4 10 l4 -4 l4 4" fill="none" stroke="#bcbec4" stroke-width="1.2"/></svg>
<svg class="ic" style="left:1857px;top:84px" width="16" height="16" viewBox="0 0 16 16"><path d="M4 6 l4 4 l4 -4" fill="none" stroke="#bcbec4" stroke-width="1.2"/></svg>
<div class="box" style="left:1869px;top:105px;width:8px;height:160px;background:#424447"></div>
<div class="box" style="left:1864px;top:165px;width:14px;height:2px;background:#c77a93"></div>
<div class="box" style="left:1864px;top:177px;width:14px;height:2px;background:#8c8e93"></div>
<div class="box" style="left:1819px;top:242px;width:48px;height:48px;border-radius:24px;background:conic-gradient(from 0deg,#b8d8f0,#d6c2ee 25%,#f0a2c6 40%,#e8a8d4 50%,#cfb8ea 65%,#a6dcec 80%,#a8dcee 92%,#b8d8f0)"></div>
<div class="box" style="left:1823.500px;top:246.500px;width:39px;height:39px;border-radius:20px;background:#747372"></div>
<svg class="ic" style="left:1813px;top:236px" width="60" height="60" viewBox="0 0 60 60"><g stroke="#000" stroke-width="3.900" stroke-linecap="round" fill="none"><path d="M20.500 20.300L27 22.800M30.300 24.800L40 20.600M17.800 27.200L26 32M38.300 30.700L42.800 26.600M25.800 36.700V42.800M33.900 32.700V42.800"/></g></svg>
<div class="box" style="left:496px;top:664px;width:1382px;height:1px;background:#2b2d30"></div>
<div class="t " style="left:506px;top:666px;height:21px;line-height:21px;color:#a9acb3">connect_to_database()</div>
<svg class="ic" style="left:652px;top:668px" width="16" height="16" viewBox="0 0 16 16"><path d="M6 4 l4 4 l-4 4" fill="none" stroke="#6f737a" stroke-width="1.2"/></svg>
<div class="t " style="left:673px;top:666px;height:21px;line-height:21px;color:#a9acb3">try</div>
<div class="box" style="left:1878px;top:38px;width:41px;height:961px;background:#2b2d30;border-left:1px solid #1e1f22"></div>
<svg class="ic" style="left:1889px;top:47px" width="20" height="22" viewBox="0 0 20 22"><g fill="none" stroke="#ced0d6" stroke-width="1.400"><path d="M3 15.500c1.500-1.500 1.800-3 1.800-6a5.200 5.200 0 0 1 10.400 0c0 3 .3 4.500 1.800 6z" stroke-linejoin="round"/></g><path d="M8 19h4l-2 2z" fill="#ced0d6"/></svg>
<div class="box" style="left:1902px;top:48px;width:7px;height:7px;border-radius:4px;background:#db5c5c"></div>
<div class="box" style="left:41px;top:688px;width:1837px;height:1px;background:#1e1f22"></div>
<div class="t " style="left:53px;top:700px;height:20px;line-height:20px;font-size:13px;letter-spacing:0">运行</div>
<svg class="ic" style="left:107px;top:701px" width="16" height="16" viewBox="0.500 0.500 15 15"><path fill="#4a86c8" d="M7.9 1C5.9 1 5 1.9 5 3v1.5h3.2V5H3.5C2.3 5 1.3 5.9 1.1 7.600c-.2 1.600 0 3 1.200 3.300.4.1.9.1 1.200.1H4.500V9.200c0-1.200 1-2.200 2.300-2.200h3.100c1 0 1.800-.8 1.800-1.800V3c0-1-.9-1.800-1.900-1.900C9.200 1 8.500 1 7.900 1z"/><circle cx="6.400" cy="2.800" r=".65" fill="#2b2d30"/><path fill="#f5cf3e" d="M8.100 15c2 0 2.900-.9 2.900-2v-1.500H7.800V11h4.700c1.200 0 2.200-.9 2.400-2.600.2-1.600 0-3-1.200-3.300-.4-.1-.9-.1-1.200-.1H11.500v1.800c0 1.200-1 2.200-2.300 2.200H6.100c-1 0-1.800.8-1.800 1.800V13c0 1 .9 1.800 1.900 1.900.6.1 1.300.1 1.900.1z"/><circle cx="9.600" cy="13.200" r=".65" fill="#2b2d30"/></svg>
<div class="box" style="left:116px;top:701px;width:6px;height:6px;border-radius:3px;background:#5fb865"></div>
<div class="t " style="left:126px;top:700px;height:20px;line-height:20px;letter-spacing:.45px">mysql-python</div>
<svg class="ic" style="left:223px;top:705px" width="9" height="9" viewBox="0 0 9 9"><path d="M1 1l7 7M8 1l-7 7" stroke="#868a91" stroke-width="1.100"/></svg>
<div class="box" style="left:95px;top:727px;width:148px;height:3px;border-radius:1.500px;background:#6b6e75"></div>
<div class="box" style="left:41px;top:729px;width:1837px;height:1px;background:#1e1f22"></div>
<svg class="ic" style="left:44px;top:739px" width="16" height="16" viewBox="0 0 16 16"><path d="M12 4A5.500 5.500 0 1 0 7 13.400" fill="none" stroke="#ced0d6" stroke-width="1.100"/><path d="M9.500 1.200l2.800 2.800-3 2" fill="none" stroke="#ced0d6" stroke-width="1.100"/><path d="M9 9l4.500 2.700L9 14.500z" fill="none" stroke="#5fb865" stroke-width="1.100" stroke-linejoin="round"/></svg>
<div class="box" style="left:73px;top:741px;width:12px;height:12px;border-radius:2px;background:#6e3635;border:1.500px solid #c75a56"></div>
<div class="box" style="left:95px;top:737px;width:1px;height:20px;background:#43454a"></div>
<div class="box" style="left:111px;top:741px;width:2px;height:2px;border-radius:1px;background:#ced0d6"></div><div class="box" style="left:111px;top:746px;width:2px;height:2px;border-radius:1px;background:#ced0d6"></div><div class="box" style="left:111px;top:751px;width:2px;height:2px;border-radius:1px;background:#ced0d6"></div>
<div class="box" style="left:72px;top:764px;width:1806px;height:235px;background:#1e1f22"></div>
<div class="t m" style="left:84px;top:766px;height:22px;line-height:22px;color:#bcbec4">D:\Anaconda\python.exe D:\Py-OpenCV\mysql-python.py</div>
<svg class="ic" style="left:48px;top:776px" width="16" height="16" viewBox="0 0 16 16"><path d="M8 14V3M3.500 7.500L8 3l4.500 4.500" fill="none" stroke="#53565c" stroke-width="1.100"/></svg>
<svg class="ic" style="left:48px;top:802px" width="16" height="16" viewBox="0 0 16 16"><path d="M8 2v11M3.500 8.500L8 13l4.500-4.500" fill="none" stroke="#53565c" stroke-width="1.100"/></svg>
<svg class="ic" style="left:48px;top:829px" width="16" height="16" viewBox="0 0 16 16"><path d="M1.500 3.500h13M1.500 8h10.500a2 2 0 0 1 0 4.500H9M1.500 12.500h4M10.500 10.500l-2 2 2 2" fill="none" stroke="#ced0d6" stroke-width="1.100"/></svg>
<div class="box" style="left:45px;top:852px;width:22px;height:22px;border-radius:4px;background:#43454a"></div>
<svg class="ic" style="left:48px;top:855px" width="16" height="16" viewBox="0 0 16 16"><path d="M1.500 3.500h6M1.500 8h6M1.500 13.500h13M11.500 2v8M8.500 7l3 3 3-3" fill="none" stroke="#ced0d6" stroke-width="1.100"/></svg>
<svg class="ic" style="left:48px;top:881px" width="16" height="16" viewBox="0 0 16 16"><g fill="none" stroke="#ced0d6" stroke-width="1.100"><path d="M4.500 6V2.500h7V6"/><rect x="1.500" y="6" width="13" height="6" rx="1.500"/><rect x="4.500" y="9.500" width="7" height="4.500" fill="#2b2d30"/></g></svg>
<svg class="ic" style="left:48px;top:907px" width="16" height="16" viewBox="0 0 16 16"><g fill="none" stroke="#ced0d6" stroke-width="1.100"><path d="M2 4.500h12M6 4.500V2.500h4v2M3.500 4.500l.7 9.500h7.600l.7-9.500M6.500 7v4.500M9.500 7v4.500"/></g></svg>
<div class="box" style="left:4px;top:724px;width:30px;height:30px;border-radius:6px;background:#494b50"></div>
<svg class="ic" style="left:9px;top:729px" width="20" height="20" viewBox="0 0 20 20"><path d="M4 3.500l13 6.500-13 6.500z" fill="none" stroke="#ced0d6" stroke-width="1.400" stroke-linejoin="round"/></svg>
<div class="box" style="left:21px;top:728px;width:7px;height:7px;border-radius:4px;background:#5fb865"></div>
<svg class="ic" style="left:9px;top:769px" width="20" height="20" viewBox="0 0 20 20"><g fill="none" stroke="#ced0d6" stroke-width="1.400"><path d="M7 6.500V4a2 2 0 0 1 2-2h2a2 2 0 0 1 2 2v4a2 2 0 0 1-2 2H9a2 2 0 0 0-2 2v4a2 2 0 0 0 2 2h2a2 2 0 0 0 2-2v-2.500"/><path d="M7 6.500H4a2 2 0 0 0-2 2v3a2 2 0 0 0 2 2h3M13 13.500h3a2 2 0 0 0 2-2v-3a2 2 0 0 0-2-2h-3"/></g></svg>
<svg class="ic" style="left:9px;top:809px" width="20" height="20" viewBox="0 0 20 20"><g fill="none" stroke="#ced0d6" stroke-width="1.400" stroke-linejoin="round"><path d="M10 2.500l8 4-8 4-8-4z"/><path d="M2 10.500l8 4 8-4M2 14.500l8 4 8-4"/></g></svg>
<svg class="ic" style="left:9px;top:849px" width="20" height="20" viewBox="0 0 20 20"><g fill="none" stroke="#ced0d6" stroke-width="1.400" stroke-linejoin="round"><path d="M6 2.500h8l4.500 7.500-4.500 7.500H6L1.500 10z"/><path d="M8 6.500l5.500 3.500L8 13.500z"/></g></svg>
<svg class="ic" style="left:9px;top:889px" width="20" height="20" viewBox="0 0 20 20"><g fill="none" stroke="#ced0d6" stroke-width="1.400"><rect x="2" y="3" width="16" height="14" rx="2"/><path d="M5.500 7l3 3-3 3M10.500 13.500h4"/></g></svg>
<svg class="ic" style="left:9px;top:929px" width="20" height="20" viewBox="0 0 20 20"><g fill="none" stroke="#ced0d6" stroke-width="1.400"><circle cx="10" cy="10" r="8"/><path d="M10 5.500v6M10 13.500v1.500"/></g></svg>
<svg class="ic" style="left:9px;top:968px" width="20" height="20" viewBox="0 0 20 20"><g fill="none" stroke="#ced0d6" stroke-width="1.400"><circle cx="5.500" cy="4.500" r="2.200"/><circle cx="14.500" cy="6.500" r="2.200"/><path d="M5.500 6.700V19M14.500 8.700c0 3-3 4-9 4.500"/></g></svg>
<div class="box" style="left:0;top:999px;width:1919px;height:27px;background:#2b2d30;border-top:1px solid #1e1f22"></div>
<div class="box" style="left:13px;top:1009px;width:8px;height:8px;border-radius:2px;border:1.500px solid #548af7"></div>
<div class="t st" style="left:25px;top:1004px;height:20px;line-height:20px;">Py-OpenCV</div>
<svg class="ic" style="left:101px;top:1005px" width="16" height="16" viewBox="0 0 16 16"><path d="M6 4 l4 4 l-4 4" fill="none" stroke="#a4a7ae" stroke-width="1.2"/></svg>
<svg class="ic" style="left:122px;top:1005px" width="16" height="16" viewBox="0.500 0.500 15 15"><path fill="#4a86c8" d="M7.9 1C5.9 1 5 1.9 5 3v1.5h3.2V5H3.5C2.3 5 1.3 5.9 1.1 7.600c-.2 1.600 0 3 1.200 3.300.4.1.9.1 1.200.1H4.500V9.200c0-1.200 1-2.200 2.300-2.200h3.100c1 0 1.800-.8 1.800-1.800V3c0-1-.9-1.800-1.900-1.900C9.200 1 8.500 1 7.900 1z"/><circle cx="6.400" cy="2.800" r=".65" fill="#2b2d30"/><path fill="#f5cf3e" d="M8.100 15c2 0 2.900-.9 2.900-2v-1.500H7.800V11h4.700c1.200 0 2.200-.9 2.400-2.600.2-1.600 0-3-1.200-3.300-.4-.1-.9-.1-1.200-.1H11.500v1.800c0 1.200-1 2.200-2.300 2.200H6.100c-1 0-1.800.8-1.800 1.800V13c0 1 .9 1.800 1.900 1.900.6.1 1.300.1 1.900.1z"/><circle cx="9.600" cy="13.200" r=".65" fill="#2b2d30"/></svg>
<div class="t st" style="left:142px;top:1004px;height:20px;line-height:20px;">mysql-python.py</div>
<div class="t st" style="left:1570px;top:1004px;height:20px;line-height:20px;font-size:13px;letter-spacing:-.3px">12:19</div>
<div class="t st" style="left:1618px;top:1004px;height:20px;line-height:20px;font-size:12.500px;letter-spacing:0">CRLF</div>
<div class="t st" style="left:1666px;top:1004px;height:20px;line-height:20px;">UTF-8</div>
<div class="t st" style="left:1722px;top:1004px;height:20px;line-height:20px;font-size:13px">4 个空格</div>
<div class="t st" style="left:1789px;top:1004px;height:20px;line-height:20px;">D:\Anaconda</div>
<svg class="ic" style="left:1886px;top:1005px" width="16" height="16" viewBox="0 0 16 16"><g fill="none" stroke="#ced0d6" stroke-width="1.100"><rect x="2.500" y="7" width="8" height="6.500" rx="1.200"/><path d="M8 7V5a2.500 2.500 0 0 1 5 0v1.500"/></g></svg>
<div class="t" style="left:1456px;top:908px;height:76px;line-height:76px;font-size:56px;font-weight:400;letter-spacing:0;word-spacing:6px;-webkit-text-stroke:1px #fff;color:#fff;text-shadow:2px 2px 3px rgba(0,0,0,.7)">知乎 @忆梦怀思</div>
<div class="box" style="left:767px;top:338px;width:400px;height:430px;border-radius:8px;background:#f0f0f0;border:1px solid #fafafa;box-shadow:0 2px 10px rgba(0,0,0,.25);overflow:hidden;letter-spacing:0">
<div class="box" style="left:-1px;top:-1px;width:400px;height:30px;background:#f3f3f3"></div>
<svg class="ic" style="left:10px;top:5px" width="10" height="16" viewBox="0 0 10 16"><path d="M8.800 .8C5.500 1.500 2 5 1.800 10.500L1 15.500h.9l.8-3.200C6.500 11 9.200 6 8.800 .8z" fill="#7f9fd0" stroke="#16233f" stroke-width=".9"/><path d="M7.800 2.500L2.500 12" stroke="#16233f" stroke-width=".6"/></svg>
<div class="t " style="left:29px;top:3px;height:20px;line-height:20px;font-size:12px;color:#8f8f8f">数据库连接</div>
<div class="box" style="left:280px;top:13px;width:10px;height:1px;background:#8c8c8c"></div>
<div class="box" style="left:325px;top:8px;width:10px;height:10px;border:1px solid #8c8c8c"></div>
<svg class="ic" style="left:369.500px;top:6.500px" width="13" height="13" viewBox="0 0 12 12"><path d="M.5.500l11 11M11.500.500l-11 11" stroke="#858585" stroke-width=".95"/></svg>
<div class="box" style="left:74px;top:117px;width:250px;height:225px;background:#dcdad5"></div>
<div class="t " style="left:74px;top:128px;height:23px;line-height:23px;width:84px;text-align:center;font-size:12px;color:#000;letter-spacing:.28px">主机地址</div>
<div class="box" style="left:168px;top:127px;width:146px;height:23px;background:#fff;border:1px solid #9e9a91;border-radius:2px"></div>
<div class="t " style="left:171px;top:128px;height:23px;line-height:23px;font-size:12.500px;color:#000;letter-spacing:.28px">localhost</div>
<div class="t " style="left:74px;top:171px;height:23px;line-height:23px;width:84px;text-align:center;font-size:12px;color:#000;letter-spacing:.28px">用户名</div>
<div class="box" style="left:168px;top:170px;width:146px;height:23px;background:#fff;border:1px solid #9e9a91;border-radius:2px"></div>
<div class="t " style="left:171px;top:171px;height:23px;line-height:23px;font-size:12.500px;color:#000;letter-spacing:.28px">python</div>
<div class="t " style="left:74px;top:214px;height:23px;line-height:23px;width:84px;text-align:center;font-size:12px;color:#000;letter-spacing:.28px">密码</div>
<div class="box" style="left:168px;top:213px;width:146px;height:23px;background:#fff;border:1px solid #9e9a91;border-radius:2px"></div>
<div class="t " style="left:171px;top:213px;height:23px;line-height:23px;font-size:12.500px;color:#000;letter-spacing:.15px">*********</div>
<div class="t " style="left:74px;top:257px;height:23px;line-height:23px;width:84px;text-align:center;font-size:12px;color:#000;letter-spacing:.28px">数据库名称</div>
<div class="box" style="left:168px;top:256px;width:146px;height:23px;background:#fff;border:1px solid #9e9a91;border-radius:2px"></div>
<div class="t " style="left:171px;top:257px;height:23px;line-height:23px;font-size:12.500px;color:#000;letter-spacing:.28px">python</div>
<div class="box" style="left:152px;top:299px;width:93px;height:33px;background:#dcdad5;border:1px solid #9e9a91;border-radius:2px"></div>
<div class="t " style="left:152px;top:300px;height:33px;line-height:33px;width:93px;text-align:center;font-size:12px;color:#000;letter-spacing:.28px">连接</div>
</div>
<div class="box" style="left:1096px;top:468px;width:444px;height:171px;border-radius:8px;background:#f0f0f0;border:1px solid #c9c9c9;box-shadow:0 2px 10px rgba(0,0,0,.25);overflow:hidden;letter-spacing:0">
<div class="box" style="left:0;top:0;width:443px;height:30px;background:linear-gradient(to right,#fbf3f0,#f8ecee 50%,#f6eff5)"></div>
<svg class="ic" style="left:11px;top:6px" width="10" height="16" viewBox="0 0 10 16"><path d="M8.800 .8C5.500 1.500 2 5 1.800 10.500L1 15.500h.9l.8-3.200C6.500 11 9.200 6 8.800 .8z" fill="#7f9fd0" stroke="#16233f" stroke-width=".9"/><path d="M7.800 2.500L2.500 12" stroke="#16233f" stroke-width=".6"/></svg>
<div class="t " style="left:30px;top:4px;height:20px;line-height:20px;font-size:12px;color:#000">连接错误</div>
<svg class="ic" style="left:423px;top:9px" width="10" height="10" viewBox="0 0 10 10"><path d="M.5.500l9 9M9.500.500l-9 9" stroke="#222" stroke-width="1.100"/></svg>
<div class="box" style="left:0;top:30px;width:443px;height:88px;background:#fff"></div>
<div class="box" style="left:25px;top:58px;width:32px;height:32px;border-radius:16px;background:radial-gradient(circle at 50% 30%,#ea5a2c,#cf3a12)"></div>
<svg class="ic" style="left:35px;top:68px" width="12" height="12" viewBox="0 0 12 12"><path d="M1 1l10 10M11 1L1 11" stroke="#fff" stroke-width="1.800"/></svg>
<div class="t " style="left:65px;top:58px;height:16px;line-height:16px;font-size:12px;color:#000;letter-spacing:-.12px">1045 (28000): Access denied for user 'python'@'localhost' (using</div>
<div class="t " style="left:65px;top:74px;height:16px;line-height:16px;font-size:12px;color:#000;letter-spacing:-.12px">password: YES)</div>
<div class="box" style="left:337px;top:131px;width:86px;height:26px;background:#fdfdfd;border:1px solid #3a7ca5;border-radius:4px"></div>
<div class="t " style="left:337px;top:132px;height:26px;line-height:26px;width:86px;text-align:center;font-size:12px;color:#000">确定</div>
</div>
</body></html>
